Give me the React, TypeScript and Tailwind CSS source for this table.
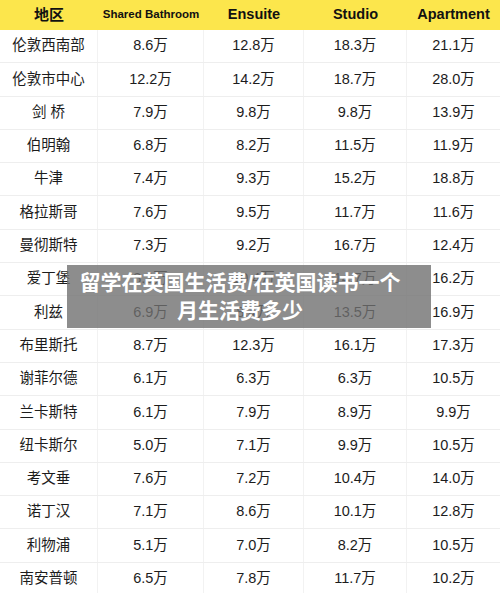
const font = '"Liberation Sans", "Noto Sans CJK SC", sans-serif';

type Row = [string, string, string, string, string];

const rows: Row[] = [
  ['伦敦西南部', '8.6万', '12.8万', '18.3万', '21.1万'],
  ['伦敦市中心', '12.2万', '14.2万', '18.7万', '28.0万'],
  ['剑 桥', '7.9万', '9.8万', '9.8万', '13.9万'],
  ['伯明翰', '6.8万', '8.2万', '11.5万', '11.9万'],
  ['牛津', '7.4万', '9.3万', '15.2万', '18.8万'],
  ['格拉斯哥', '7.6万', '9.5万', '11.7万', '11.6万'],
  ['曼彻斯特', '7.3万', '9.2万', '16.7万', '12.4万'],
  ['爱丁堡', '8.3万', '10.4万', '14.7万', '16.2万'],
  ['利兹', '6.9万', '8.4万', '13.5万', '16.9万'],
  ['布里斯托', '8.7万', '12.3万', '16.1万', '17.3万'],
  ['谢菲尔德', '6.1万', '6.3万', '6.3万', '10.5万'],
  ['兰卡斯特', '6.1万', '7.9万', '8.9万', '9.9万'],
  ['纽卡斯尔', '5.0万', '7.1万', '9.9万', '10.5万'],
  ['考文垂', '7.6万', '7.2万', '10.4万', '14.0万'],
  ['诺丁汉', '7.1万', '8.6万', '10.1万', '12.8万'],
  ['利物浦', '5.1万', '7.0万', '8.2万', '10.5万'],
  ['南安普顿', '6.5万', '7.8万', '11.7万', '10.2万'],
];

const cols = 'grid grid-cols-[98px_106px_100px_103px_1fr]';

export default function App() {
  return (
    <div className="relative w-[500px] h-[593px] overflow-hidden bg-white" style={{ fontFamily: font }}>
      <div className={`${cols} h-[30px] bg-[#fce64c] text-[#111] font-bold`}>
        <div className="flex items-center justify-center text-[15px]">地区</div>
        <div className="flex items-center justify-center text-[11.5px]">Shared Bathroom</div>
        <div className="flex items-center justify-center text-[14.5px]">Ensuite</div>
        <div className="flex items-center justify-center text-[14.5px]">Studio</div>
        <div className="flex items-center justify-center text-[14.5px]">Apartment</div>
      </div>
      {rows.map((r) => (
        <div key={r[0]} className={`${cols} h-[33.3px] border-b border-[#eeeeee] text-[#1c1c1c] text-[14.5px]`}>
          {r.map((c, i) => (
            <div
              key={i}
              className={`flex items-center justify-center ${i < 4 ? 'border-r border-[#f2f2f2]' : ''}`}
            >
              {c}
            </div>
          ))}
        </div>
      ))}

      {/* watermark title over the table */}
      <div className="absolute left-[67px] top-[265px] w-[364px] h-[63px] pr-[18px] bg-[rgba(112,112,112,0.8)] flex flex-col items-center justify-center text-white font-bold text-[21px] leading-[28px]">
        <div>留学在英国生活费/在英国读书一个</div>
        <div>月生活费多少</div>
      </div>
    </div>
  );
}
